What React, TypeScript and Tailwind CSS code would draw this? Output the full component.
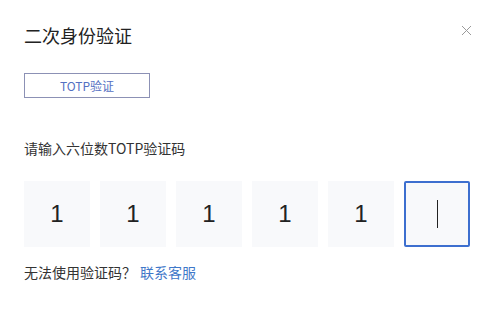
import React from "react";

export default function App() {
  const digits = ["1", "1", "1", "1", "1", ""];
  return (
    <div
      className="w-[494px] h-[328px] bg-white relative text-[#333]"
      style={{ fontFamily: '"Noto Sans CJK SC", "Liberation Sans", sans-serif' }}
    >
      <button className="absolute left-[460px] top-[24px] w-[12px] h-[12px] flex items-center justify-center">
        <svg width="11" height="11" viewBox="0 0 11 11">
          <path d="M1 1L10 10M10 1L1 10" stroke="#9a9a9a" strokeWidth="1" />
        </svg>
      </button>
      <div className="px-[24px] pt-[23px] flex flex-col">
        <h1 className="text-[18px] leading-[24px] text-[#222] font-normal">二次身份验证</h1>
        <div className="mt-[26px]">
          <div className="w-[126px] h-[25px] border border-[#8c91b5] flex items-center justify-center text-[12px] text-[#5470c2]">
            TOTP验证
          </div>
        </div>
        <div className="mt-[40px] text-[14px] leading-[20px] text-[#333]">请输入六位数TOTP验证码</div>
        <div className="mt-[23px] flex gap-[10px]">
          {digits.map((d, i) =>
            i === 5 ? (
              <div
                key={i}
                className="w-[66px] h-[66px] bg-[#f8f9fb] border-2 border-[#3d6fcf] rounded-[2px] flex items-center justify-center"
              >
                <div className="w-[1px] h-[28px] bg-[#222]" />
              </div>
            ) : (
              <div
                key={i}
                className="w-[66px] h-[66px] bg-[#f8f9fb] flex items-center justify-center text-[24px] text-[#222]"
                style={{ fontFamily: '"Liberation Sans", sans-serif' }}
              >
                {d}
              </div>
            )
          )}
        </div>
        <div className="mt-[15px] text-[14px] leading-[20px] text-[#333] flex">
          <span>无法使用验证码？</span>
          <span className="text-[#3f78c9] ml-[4px]">联系客服</span>
        </div>
      </div>
    </div>
  );
}
